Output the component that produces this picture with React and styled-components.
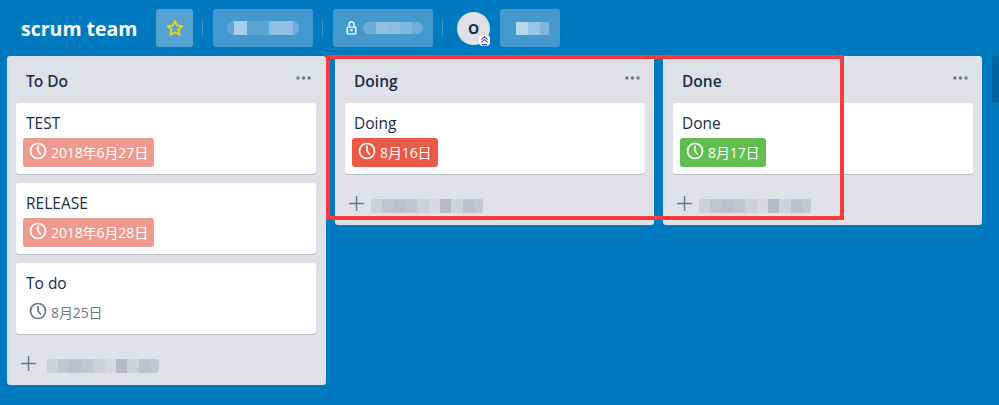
import React from "react";
import styled, { createGlobalStyle } from "styled-components";

const Global = createGlobalStyle`
  html, body { margin: 0; padding: 0; }
  body { background: #0079bf; font-family: "Open Sans", "Noto Sans CJK SC", sans-serif; }
`;
const Page = styled.div`
  position: relative; width: 999px; height: 405px; overflow: hidden; background: #0079bf;
`;
const Header = styled.header`
  display: flex; align-items: center; height: 56px; box-sizing: border-box; padding: 0 0 0 21px;
`;
const BoardTitle = styled.h1`
  margin: 2px 19px 0 0; width: 116px; flex: none; color: #fff; font-size: 19.5px; font-weight: 700; line-height: 26px; white-space: nowrap;
`;
const HeaderButton = styled.div`
  display: flex; align-items: center; justify-content: ${p => p.$center ? "center" : "flex-start"};
  gap: 6px; box-sizing: border-box; height: 38px; width: ${p => p.$w}px; padding-left: ${p => p.$pl || 0}px;
  flex: none; border-radius: 3px; background: ${p => p.$light ? "#55a3d5" : "#4398cd"};
`;
const Divider = styled.span`
  flex: none; width: 1px; height: 18px; margin: 0 10px 0 9px; background: #3a94ca;
`;
const Mosaic = styled.div`
  display: flex; align-items: center; height: ${p => p.$h}px; border-radius: ${p => p.$r || 0}px; background: ${p => p.$bg || "transparent"};
  margin-left: ${p => p.$ml || 0}px; margin-top: ${p => p.$mt || 0}px; overflow: hidden; filter: blur(0.4px);
`;
const Tile = styled.i`
  display: block; flex: none; width: ${p => p.$w}px; height: 100%; background: ${p => p.$c};
`;
const Avatar = styled.div`
  position: relative; flex: none; box-sizing: border-box; width: 33px; height: 33px; margin: 0 10px 0 4px; border-radius: 50%;
  background: #dfe1e6; color: #172b4d; display: flex; align-items: center; justify-content: center;
  font-size: 14px; font-weight: 700;
`;
const AdminBadge = styled.svg`
  position: absolute; right: 0; bottom: -1px; width: 11px; height: 11px;
`;
const Board = styled.main`
  display: flex; align-items: flex-start; gap: 9px; padding-left: 7px;
`;
const Column = styled.section`
  --inset: ${p => p.$first ? 10 : 9}px;
  --add-inset: ${p => p.$first ? 5 : 4}px;
  flex: none; box-sizing: border-box; width: 319px; border-radius: 3px; background: #dfe1e6;
  padding: 0 ${p => p.$first ? 10 : 9}px 0 ${p => p.$first ? 9 : 10}px; height: ${p => p.$h}px;
  display: flex; flex-direction: column;
`;
const Stub = styled.div`
  flex: none; width: 20px; height: 47px; border-radius: 3px; background: #0067a3; margin-left: 1px;
`;
const ColumnHead = styled.div`
  display: flex; justify-content: space-between; height: 47px; padding: 0 5px 0 var(--inset); box-sizing: border-box; flex: none;
`;
const ColumnName = styled.h2`
  margin: 13px 0 0; color: #172b4d; font-family: ${p => p.$bold ? '"Open Sans"' : '"Noto Sans"'}, sans-serif;
  font-size: 15.5px; font-weight: ${p => p.$bold ? 600 : 500}; line-height: 24px;
`;
const More = styled.svg`
  width: 15px; height: 4px; margin-top: 20px;
`;
const Cards = styled.div`
  display: flex; flex-direction: column; gap: 9px;
`;
const Card = styled.article`
  box-sizing: border-box; height: 71px; padding: 9px 7px 0; border-radius: 3px; background: #fff; box-shadow: 0 1px 0 #b3bac5;
`;
const CardTitle = styled.div`
  padding-left: calc(var(--inset) - 7px); color: #172b4d; font-size: 15.5px; line-height: 22px; white-space: nowrap;
`;
const Badge = styled.div`
  display: inline-flex; align-items: center; gap: 4px; box-sizing: border-box; height: 29px; margin-top: 4px; padding: 0 6px 0 6px;
  border-radius: 3px; background: ${p => p.$bg || "transparent"}; color: ${p => p.$fg || "#fff"};
  font-size: 14px; letter-spacing: -0.1px; line-height: 20px; white-space: nowrap;
  & > svg { margin-top: -3px; }
`;
const AddRow = styled.div`
  display: flex; align-items: center; margin-top: auto; height: 44px; padding-left: var(--add-inset); box-sizing: border-box;
`;
const Highlight = styled.div`
  position: absolute; left: 326px; top: 55px; width: 518px; height: 165px; box-sizing: border-box; border: 4px solid #fb3a3e; pointer-events: none;
`;

const Clock = ({ color = "#fff" }) => (
  <svg width="18" height="18" viewBox="0 0 18 18" fill="none" stroke={color} strokeWidth="1.7" strokeLinecap="round">
    <circle cx="9" cy="9" r="7.5" />
    <path d="M9 4.4V9l2.4 3" />
  </svg>
);
const Plus = () => (
  <svg width="15" height="15" viewBox="0 0 15 15" stroke="#6b778c" strokeWidth="1.5">
    <path d="M7.5 0v15M0 7.5h15" />
  </svg>
);
const Dots = () => (
  <More viewBox="0 0 15 4" fill="#6b778c">
    <circle cx="2" cy="2" r="1.7" /><circle cx="7.5" cy="2" r="1.7" /><circle cx="13" cy="2" r="1.7" />
  </More>
);
const ADD_TILES = [[11,"#cdd0d7"],[11,"#c2c5ce"],[12,"#bdc0ca"],[12,"#c3c6cf"],[12,"#cdd0d7"],[11,"#d6d8de"],[11,"#b6b9c5"],[12,"#cfd1d8"],[12,"#bfc2cc"],[8,"#c5c8d1"]];
const AddBlur = ({ ml }) => (
  <Mosaic $h={14} $ml={ml} $mt={5} $r={2}>
    {ADD_TILES.map(([w, c], i) => <Tile key={i} $w={w} $c={c} />)}
  </Mosaic>
);

const BOARD_TILES = [[7,"#5ca6d4"],[13,"#a3cde8"],[22,"#5ca6d4"],[24,"#8fc1e2"],[6,"#6fb0da"]];
const TEAM_TILES = [[13,"#6aaedb"],[12,"#8fc0e1"],[12,"#8abde0"],[12,"#7fb7dd"],[11,"#6aaedb"]];
const MEMBER_TILES = [[12,"#b5d7ee"],[12,"#97c5e6"],[9,"#7fb7dd"]];

const Column1 = [
  { title: "TEST", date: "2018年6月27日", bg: "#ef9a8f" },
  { title: "RELEASE", date: "2018年6月28日", bg: "#ef9a8f" },
  { title: "To do", date: "8月25日", fg: "#6b778c" },
];

const CardItem = ({ title, date, bg, fg }) => (
  <Card>
    <CardTitle>{title}</CardTitle>
    <Badge $bg={bg} $fg={fg}><Clock color={fg || "#fff"} />{date}</Badge>
  </Card>
);

export default function App() {
  return (
    <Page>
      <Global />
      <Header>
        <BoardTitle>scrum team</BoardTitle>
        <HeaderButton $w={37} $center $light>
          <svg width="18" height="18" viewBox="0 0 24 24" fill="none" stroke="#f2d600" strokeWidth="2.4" strokeLinejoin="round">
            <path d="M12 2.5l2.9 6.2 6.8.8-5 4.7 1.3 6.8-6-3.4-6 3.4 1.3-6.8-5-4.7 6.8-.8z" />
          </svg>
        </HeaderButton>
        <Divider />
        <HeaderButton $w={100} $pl={14}>
          <Mosaic $h={14} $r={7} $bg="#5ca6d4">
            {BOARD_TILES.map(([w, c], i) => <Tile key={i} $w={w} $c={c} />)}
          </Mosaic>
        </HeaderButton>
        <Divider />
        <HeaderButton $w={100} $pl={13}>
          <svg width="11" height="14" viewBox="0 0 11 14" fill="#fff" fillRule="evenodd">
            <path d="M1.5 5.5h8a1 1 0 0 1 1 1v6a1 1 0 0 1-1 1h-8a1 1 0 0 1-1-1v-6a1 1 0 0 1 1-1zm.4 1.3v5.4h7.2V6.8zM5.5 8a1.3 1.3 0 1 0 0 2.6 1.3 1.3 0 0 0 0-2.6z" />
            <path d="M2.4 5.5V3.4a3.1 3.1 0 0 1 6.2 0v2.1H7.3V3.4a1.8 1.8 0 0 0-3.6 0v2.1z" />
          </svg>
          <Mosaic $h={12} $r={6} $bg="#6aaedb">
            {TEAM_TILES.map(([w, c], i) => <Tile key={i} $w={w} $c={c} />)}
          </Mosaic>
        </HeaderButton>
        <Divider />
        <Avatar>
          O
          <AdminBadge viewBox="0 0 12 12" fill="none" stroke="#3b3fc4" strokeWidth="1.1">
            <rect x="0" y="0" width="12" height="12" rx="4" fill="#fff" stroke="none" />
            <path d="M2.5 5L6 2l3.5 3M2.5 8L6 5l3.5 3M3 10.5h6" />
          </AdminBadge>
        </Avatar>
        <HeaderButton $w={60} $pl={16}>
          <Mosaic $h={13}>
            {MEMBER_TILES.map(([w, c], i) => <Tile key={i} $w={w} $c={c} />)}
          </Mosaic>
        </HeaderButton>
      </Header>
      <Board>
        <Column $first $h={329}>
          <ColumnHead><ColumnName>To Do</ColumnName><Dots /></ColumnHead>
          <Cards>{Column1.map(c => <CardItem key={c.title} {...c} />)}</Cards>
          <AddRow><Plus /><AddBlur ml={11} /></AddRow>
        </Column>
        <Column $h={169}>
          <ColumnHead><ColumnName $bold>Doing</ColumnName><Dots /></ColumnHead>
          <Cards><CardItem title="Doing" date="8月16日" bg="#eb5a46" /></Cards>
          <AddRow><Plus /><AddBlur ml={7} /></AddRow>
        </Column>
        <Column $h={169}>
          <ColumnHead><ColumnName $bold>Done</ColumnName><Dots /></ColumnHead>
          <Cards><CardItem title="Done" date="8月17日" bg="#61bd4f" /></Cards>
          <AddRow><Plus /><AddBlur ml={7} /></AddRow>
        </Column>
        <Stub />
      </Board>
      <Highlight />
    </Page>
  );
}
